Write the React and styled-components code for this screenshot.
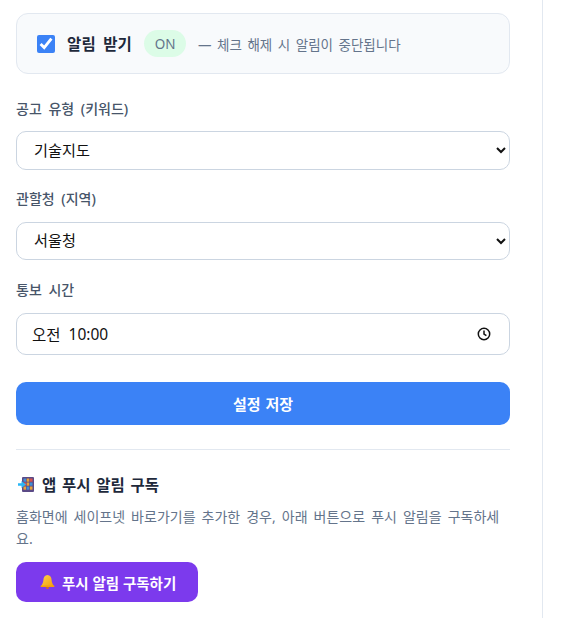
import { useState } from "react";
import styled, { createGlobalStyle } from "styled-components";

const GlobalStyle = createGlobalStyle`
	html, body {
		margin: 0;
		padding: 0;
		background: #fff;
		font-family: "Noto Sans", "Noto Sans CJK KR", sans-serif;
	}
	* {
		box-sizing: border-box;
	}
`;

const Panel = styled.div`
	width: 543px;
	height: 618px;
	padding: 13px 32px 0 16px;
	border-right: 1px solid #e2e8f0;
	overflow: hidden;
`;

const ToggleCard = styled.div`
	height: 61px;
	display: flex;
	align-items: center;
	padding: 0 20px;
	background: #f8fafc;
	border: 1px solid #e2e8f0;
	border-radius: 12px;
`;

const Check = styled.input`
	width: 18px;
	height: 18px;
	margin: 0 12px 0 0;
	accent-color: #3b82f6;
`;

const ToggleLabel = styled.span`
	font-size: 15.5px;
	font-weight: 600;
	letter-spacing: 0.2px;
	word-spacing: 3px;
	color: #1e293b;
`;

const Pill = styled.span`
	margin-left: 12px;
	width: 42px;
	height: 27px;
	display: flex;
	align-items: center;
	justify-content: center;
	border-radius: 14px;
	background: #dcfce7;
	color: #64748b;
	font-size: 13.5px;
`;

const Hint = styled.span`
	margin-left: 12px;
	font-size: 13.5px;
	word-spacing: 2px;
	color: #64748b;
`;

const Field = styled.div`
	display: flex;
	flex-direction: column;
	margin-top: ${(p) => p.$top}px;
`;

const Label = styled.label`
	height: 20px;
	margin-bottom: ${(p) => p.$gap}px;
	font-size: 14px;
	font-weight: 500;
	word-spacing: 3px;
	line-height: 20px;
	color: #475569;
`;

const Select = styled.select`
	height: ${(p) => p.$height}px;
	padding: 0 13px 2px;
	background: #fff;
	border: 1px solid #cbd5e1;
	border-radius: 10px;
	font-family: inherit;
	font-size: 15.2px;
	color: #111;
`;

const TimeBox = styled.div`
	height: 42px;
	display: flex;
	align-items: center;
	gap: 8px;
	padding: 0 18px 0 15px;
	background: #fff;
	border: 1px solid #cbd5e1;
	border-radius: 10px;
	font-size: 15.5px;
	color: #111;

	svg {
		margin-left: auto;
	}
`;

const SaveButton = styled.button`
	width: 100%;
	height: 43px;
	margin-top: 27px;
	background: #3b82f6;
	border: none;
	border-radius: 10px;
	color: #fff;
	font-family: inherit;
	font-size: 15px;
	font-weight: 700;
	word-spacing: 1px;
`;

const Divider = styled.hr`
	margin: 24px 0 0;
	border: none;
	border-top: 1px solid #e2e8f0;
`;

const PushTitle = styled.h3`
	display: flex;
	align-items: center;
	gap: 8px;
	height: 22px;
	margin: 23px 0 0 2px;
	font-size: 15.5px;
	font-weight: 600;
	word-spacing: 1.7px;
	color: #1e293b;
`;

const PushText = styled.p`
	margin: 11px 0 0;
	font-size: 14px;
	line-height: 22px;
	word-spacing: 2.4px;
	color: #64748b;
`;

const PushButton = styled.button`
	display: flex;
	align-items: center;
	gap: 7px;
	height: 40px;
	margin-top: 12px;
	padding: 0 22px 0 24px;
	background: #7c3aed;
	border: none;
	border-radius: 10px;
	color: #fff;
	font-family: inherit;
	font-size: 14.5px;
	font-weight: 700;
`;

function ClockIcon() {
	return (
		<svg width="14" height="14" viewBox="0 0 14 14" fill="none" stroke="#111" strokeWidth="1.5">
			<circle cx="7" cy="7" r="5.7" />
			<path d="M7 3.6V7l2.4 1.6" />
		</svg>
	);
}

function PhoneIcon() {
	const colors = ["#3f8fd8", "#e8a33a", "#d9534f", "#d9534f", "#e8a33a", "#3f8fd8", "#e8a33a", "#3f8fd8", "#e8a33a"];
	return (
		<svg width="16" height="15" viewBox="0 0 16 15">
			<rect x="4" y="0" width="12" height="15" rx="1" fill="#5b4a86" />
			{colors.map((c, i) => (
				<rect key={i} x={5.5 + (i % 3) * 3.2} y={1.5 + Math.floor(i / 3) * 4} width="2.6" height="3.2" fill={c} />
			))}
			<path d="M0 6.3h3.5V4L8 7.5 3.5 11V8.7H0z" fill="#29b6f6" />
		</svg>
	);
}

function BellIcon() {
	return (
		<svg width="15" height="15" viewBox="0 0 15 15">
			<defs>
				<linearGradient id="bell" x1="0" y1="0" x2="1" y2="1">
					<stop offset="0" stopColor="#fcd34d" />
					<stop offset="1" stopColor="#f59e0b" />
				</linearGradient>
			</defs>
			<path
				d="M7.5 0C4.8 0 3.6 2.2 3.4 5c-.2 2.6-1 4.3-2.4 6h13c-1.4-1.7-2.2-3.4-2.4-6C11.4 2.2 10.2 0 7.5 0z"
				fill="url(#bell)"
			/>
			<rect x="0.5" y="10.5" width="14" height="1.6" rx="0.8" fill="#f59e0b" />
			<path d="M5.8 12.2h3.4a1.7 1.7 0 0 1-3.4 0z" fill="#d97706" />
		</svg>
	);
}

export default function App() {
	const [enabled, setEnabled] = useState(true);

	return (
		<Panel>
			<GlobalStyle />
			<ToggleCard>
				<Check type="checkbox" checked={enabled} onChange={(e) => setEnabled(e.target.checked)} />
				<ToggleLabel>알림 받기</ToggleLabel>
				<Pill>ON</Pill>
				<Hint>— 체크 해제 시 알림이 중단됩니다</Hint>
			</ToggleCard>

			<Field $top={25}>
				<Label $gap={12}>공고 유형 (키워드)</Label>
				<Select $height={39} defaultValue="기술지도">
					<option>기술지도</option>
				</Select>
			</Field>

			<Field $top={19}>
				<Label $gap={13}>관할청 (지역)</Label>
				<Select $height={38} defaultValue="서울청">
					<option>서울청</option>
				</Select>
			</Field>

			<Field $top={20}>
				<Label $gap={13}>통보 시간</Label>
				<TimeBox>
					<span>오전</span>
					<span>10:00</span>
					<ClockIcon />
				</TimeBox>
			</Field>

			<SaveButton>설정 저장</SaveButton>
			<Divider />

			<PushTitle>
				<PhoneIcon />앱 푸시 알림 구독
			</PushTitle>
			<PushText>홈화면에 세이프넷 바로가기를 추가한 경우, 아래 버튼으로 푸시 알림을 구독하세요.</PushText>
			<PushButton>
				<BellIcon />푸시 알림 구독하기
			</PushButton>
		</Panel>
	);
}
